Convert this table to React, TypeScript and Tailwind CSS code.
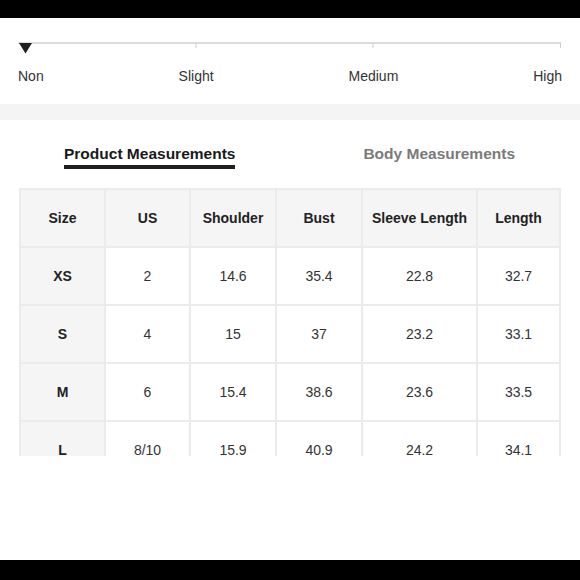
const headers = ["Size", "US", "Shoulder", "Bust", "Sleeve Length", "Length"]
const widths = ["w-[85px]", "w-[85px]", "w-[86px]", "w-[86px]", "w-[115px]", "w-[83px]"]

const rows = [
  ["XS", "2", "14.6", "35.4", "22.8", "32.7"],
  ["S", "4", "15", "37", "23.2", "33.1"],
  ["M", "6", "15.4", "38.6", "23.6", "33.5"],
  ["L", "8/10", "15.9", "40.9", "24.2", "34.1"],
]

function StretchScale() {
  return (
    <div className="px-[18px] pt-[24px]">
      <svg width="543" height="12" viewBox="0 0 543 12" className="block">
        <line x1="0" y1="1" x2="543" y2="1" stroke="#cfcfcf" strokeWidth="1.5" />
        <line x1="178" y1="1" x2="178" y2="6" stroke="#cfcfcf" strokeWidth="1" />
        <line x1="355" y1="1" x2="355" y2="6" stroke="#cfcfcf" strokeWidth="1" />
        <line x1="542.5" y1="1" x2="542.5" y2="6" stroke="#cfcfcf" strokeWidth="1" />
        <polygon points="1,1 14,1 7.5,11.5" fill="#1f1f1f" />
      </svg>
      <div className="mt-[12px] flex justify-between text-[14px] leading-[20px] text-[#333]">
        <span>Non</span>
        <span>Slight</span>
        <span>Medium</span>
        <span>High</span>
      </div>
    </div>
  )
}

function SizeTable() {
  return (
    <div className="ml-[19px] mt-[19px] h-[268px] overflow-hidden">
      <table className="w-[540px] table-fixed border-collapse text-center text-[14px] text-[#333]">
        <colgroup>
          {widths.map((w, i) => (
            <col key={i} className={w} />
          ))}
        </colgroup>
        <thead>
          <tr className="h-[58px] bg-[#f5f5f5]">
            {headers.map((h) => (
              <th key={h} className="border-2 border-[#ebebeb] font-bold text-[#222]">
                {h}
              </th>
            ))}
          </tr>
        </thead>
        <tbody>
          {rows.map((r) => (
            <tr key={r[0]} className="h-[58px]">
              {r.map((c, i) => (
                <td
                  key={i}
                  className={
                    i === 0
                      ? "border-2 border-[#ebebeb] bg-[#f5f5f5] font-bold text-[#222]"
                      : "border-2 border-[#ebebeb] bg-white"
                  }
                >
                  {c}
                </td>
              ))}
            </tr>
          ))}
        </tbody>
      </table>
    </div>
  )
}

export default function App() {
  return (
    <div className="flex h-[580px] w-[580px] flex-col bg-white font-['Liberation_Sans',Arial,sans-serif]">
      <div className="h-[18px] bg-black" />
      <div className="flex-1">
        <StretchScale />
        <div className="mt-[18px] h-[16px] bg-[#f4f4f4]" />
        <div className="flex pt-[24px] text-[15.5px] font-bold leading-[20px]">
          <div className="ml-[64px] flex flex-col">
            <span className="text-[#1a1a1a]">Product Measurements</span>
            <div className="mt-[1px] h-[4px] bg-[#1f1f1f]" />
          </div>
          <div className="ml-[128px] text-[#7a7a7a]">Body Measurements</div>
        </div>
        <SizeTable />
      </div>
      <div className="h-[20px] bg-black" />
    </div>
  )
}
